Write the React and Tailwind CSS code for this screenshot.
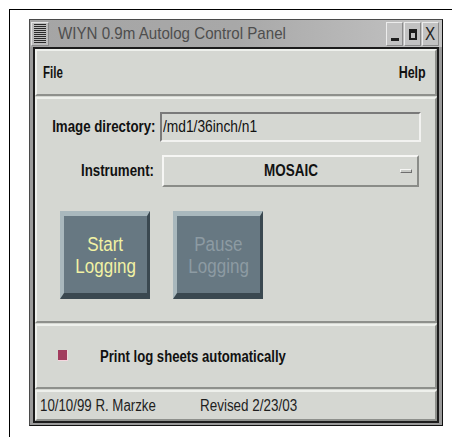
import React from "react";

const sans = { fontFamily: '"Liberation Sans", Arial, sans-serif' };

// Condensed text: the UI font is a narrow Helvetica, so squeeze Liberation Sans horizontally.
function N({ children, className = "" }) {
  return <span className={"inline-block whitespace-nowrap " + className}>{children}</span>;
}

function TitleIcon() {
  return (
    <div className="w-[18px] h-[24px] bg-[#bcbcbc] border border-[#e4e4e4] border-r-[#8a8a8a] border-b-[#8a8a8a] flex flex-col justify-center gap-[1px] px-[2px]">
      {Array.from({ length: 10 }).map((_, i) => (
        <div key={i} className="h-[1px] bg-[#2a2a2a]" />
      ))}
    </div>
  );
}

function WinButton({ children }) {
  return (
    <div className="w-[17px] h-[24px] bg-[#c2c2c2] border border-[#ececec] border-r-[#8a8a8a] border-b-[#8a8a8a] flex items-center justify-center">
      {children}
    </div>
  );
}

function BigButton({ label1, label2, color }) {
  return (
    <div
      className="w-[90px] h-[88px] bg-[#677882] border-t-[5px] border-l-[4px] border-r-[3px] border-b-[6px] border-t-[#a9b8bd] border-l-[#a9b8bd] border-r-[#3a4850] border-b-[#3a4850] flex flex-col items-center justify-center text-[20px] leading-[22px]"
      style={{ color }}
    >
      <N className="scale-x-[0.85]">{label1}</N>
      <N className="scale-x-[0.85]">{label2}</N>
    </div>
  );
}

const bevel =
  "border-[2px] border-t-[#eef0ec] border-l-[#eef0ec] border-r-[#8e908c] border-b-[#8e908c]";

export default function App() {
  return (
    <div className="w-[452px] h-[437px] bg-white pt-[9px] pl-[9px] overflow-hidden" style={sans}>
      <div className="h-full border-l border-t border-black pl-[19px] pt-[9px]">
        <div className="w-[414px] bg-[#9a9a9a] border border-[#4a4a4a] border-r-[#111] border-b-[#111]">
          {/* title bar */}
          <div className="h-[27px] flex items-center gap-[2px] px-[1px] bg-gradient-to-r from-[#a5a5a5] via-[#a8a8a8] to-[#c4c4c4]">
            <TitleIcon />
            <div className="flex-1 text-[17px] leading-none text-[#4e4e4e] pl-[7px]">
              <N className="scale-x-[0.89] origin-left">WIYN 0.9m Autolog Control Panel</N>
            </div>
            <div className="flex gap-[1px] mr-[2px]">
              <WinButton>
                <div className="w-[8px] h-[3px] bg-[#1e1e1e] mt-[12px]" />
              </WinButton>
              <WinButton>
                <div className="w-[8px] h-[11px] mt-[2px] border-[2px] border-t-[4px] border-[#1e1e1e]" />
              </WinButton>
              <WinButton>
                <span className="text-[18px] leading-none text-[#1e1e1e]">
                  <N className="scale-x-[0.85]">X</N>
                </span>
              </WinButton>
            </div>
          </div>
          {/* client area */}
          <div className="mx-[3px] mb-[2px] border-[2px] border-[#1c1c1c] bg-[#d5d7d2] text-[16px] text-[#111]">
            {/* menu bar */}
            <div className={"h-[47px] flex items-center justify-between pl-[6px] pr-[9px] font-bold " + bevel}>
              <N className="scale-x-[0.72] origin-left">File</N>
              <N className="scale-x-[0.78] origin-right">Help</N>
            </div>
            {/* main form */}
            <div className={"mt-[1px] h-[226px] pt-[13px] " + bevel}>
              <div className="flex items-center">
                <div className="w-[123px] flex justify-end font-bold pr-[5px]">
                  <N className="scale-x-[0.83] origin-right">Image directory:</N>
                </div>
                <div className="w-[261px] h-[30px] border-[2px] border-t-[#7a7a7a] border-l-[#7a7a7a] border-r-[#f2f2f0] border-b-[#f2f2f0] bg-[#d5d7d2] flex items-center pl-[1px]">
                  <N className="scale-x-[0.86] origin-left">/md1/36inch/n1</N>
                </div>
              </div>
              <div className="flex items-center mt-[13px]">
                <div className="w-[125px] flex justify-end font-bold pr-[8px]">
                  <N className="scale-x-[0.83] origin-right">Instrument:</N>
                </div>
                <div className="w-[257px] h-[32px] border-[2px] border-t-[#f6f6f4] border-l-[#f6f6f4] border-r-[#8a8c88] border-b-[#8a8c88] flex items-center justify-center relative">
                  <N className="scale-x-[0.84] font-bold">MOSAIC</N>
                  <div className="absolute right-[5px] top-[12px] w-[12px] h-[4px] border border-t-[#f6f6f4] border-l-[#f6f6f4] border-r-[#6e6e6e] border-b-[#6e6e6e] bg-[#c8cac6]" />
                </div>
              </div>
              <div className="flex gap-[23px] pl-[23px] mt-[24px]">
                <BigButton label1="Start" label2="Logging" color="#f2f2a4" />
                <BigButton label1="Pause" label2="Logging" color="#8d9ba3" />
              </div>
            </div>
            {/* option row */}
            <div className={"mt-[1px] h-[65px] flex items-center " + bevel}>
              <div className="ml-[21px] mt-[-2px] w-[10px] h-[11px] bg-[#a23c5e] border-r border-b border-[#f4d6de]" />
              <span className="ml-[32px] font-bold">
                <N className="scale-x-[0.82] origin-left">Print log sheets automatically</N>
              </span>
            </div>
            {/* status bar */}
            <div className={"mt-[1px] h-[31px] flex items-center text-[#1e1e1e] " + bevel}>
              <span className="ml-[3px] w-[160px]">
                <N className="scale-x-[0.83] origin-left">10/10/99 R. Marzke</N>
              </span>
              <N className="scale-x-[0.84] origin-left">Revised 2/23/03</N>
            </div>
          </div>
        </div>
      </div>
    </div>
  );
}
